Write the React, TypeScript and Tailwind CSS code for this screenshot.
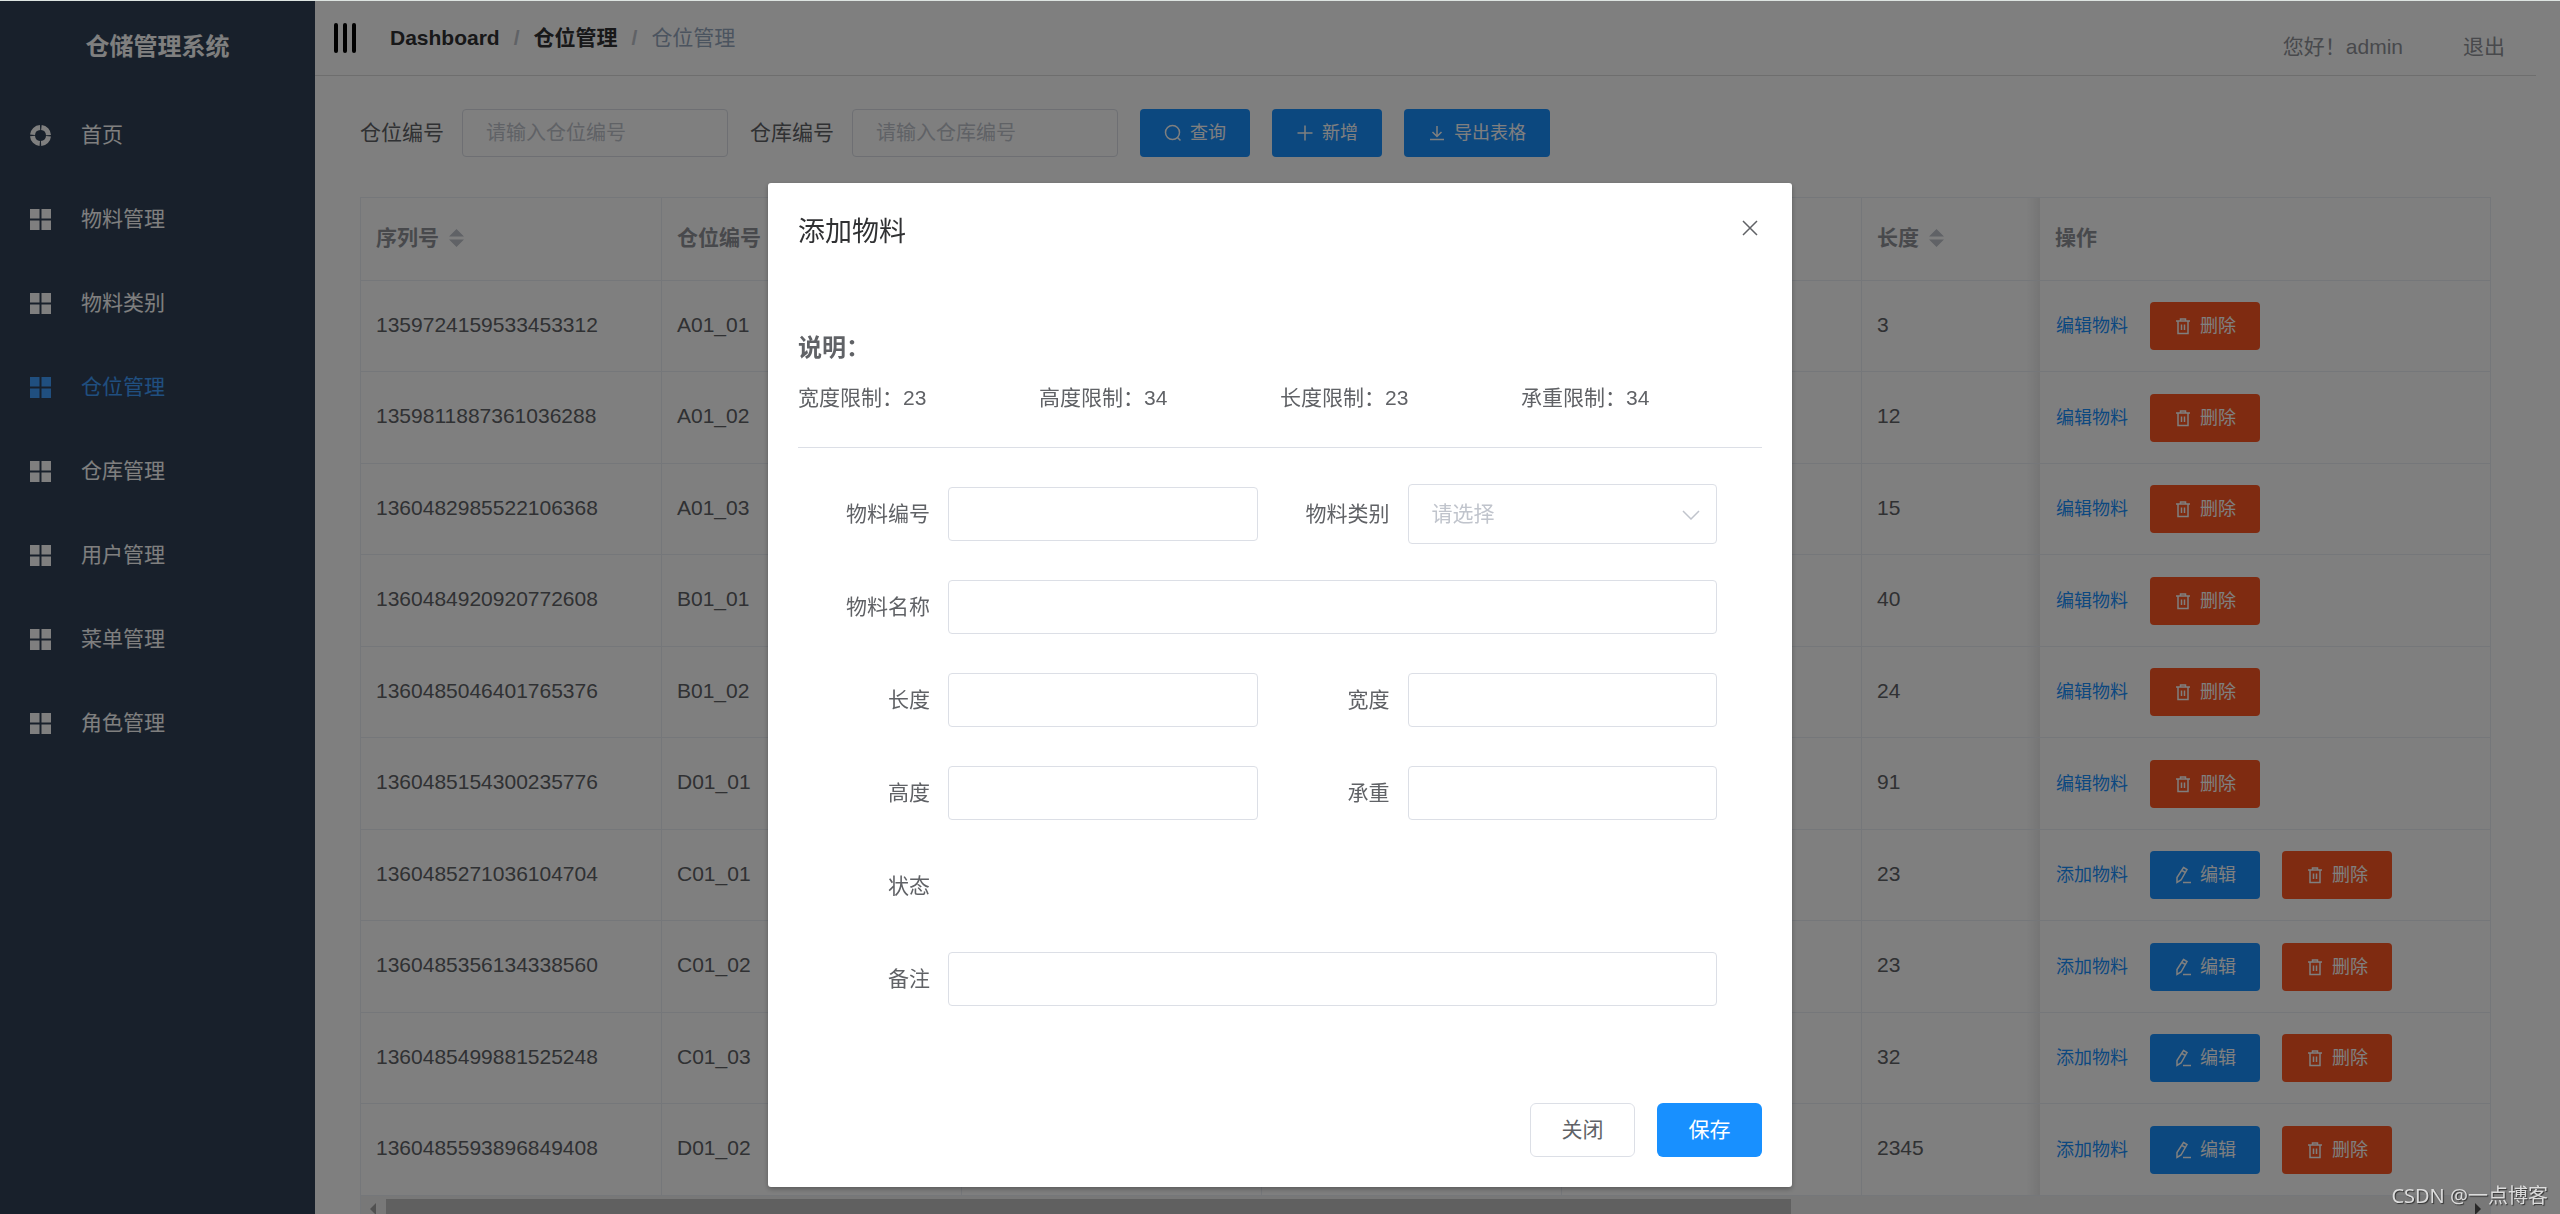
import type { ReactNode } from 'react';

type Row = { id: string; code: string; length: string; stocked: boolean };

const menu = ['首页', '物料管理', '物料类别', '仓位管理', '仓库管理', '用户管理', '菜单管理', '角色管理'];
const activeMenu = '仓位管理';

const rows: Row[] = [
  { id: '1359724159533453312', code: 'A01_01', length: '3', stocked: true },
  { id: '1359811887361036288', code: 'A01_02', length: '12', stocked: true },
  { id: '1360482985522106368', code: 'A01_03', length: '15', stocked: true },
  { id: '1360484920920772608', code: 'B01_01', length: '40', stocked: true },
  { id: '1360485046401765376', code: 'B01_02', length: '24', stocked: true },
  { id: '1360485154300235776', code: 'D01_01', length: '91', stocked: true },
  { id: '1360485271036104704', code: 'C01_01', length: '23', stocked: false },
  { id: '1360485356134338560', code: 'C01_02', length: '23', stocked: false },
  { id: '1360485499881525248', code: 'C01_03', length: '32', stocked: false },
  { id: '1360485593896849408', code: 'D01_02', length: '2345', stocked: false },
];

const limits = [
  ['宽度限制', '23'],
  ['高度限制', '34'],
  ['长度限制', '23'],
  ['承重限制', '34'],
];

const iconPaths = {
  search: (
    <>
      <circle cx="8.5" cy="8.5" r="7" />
      <path d="M13.5 13.5 16.5 16.5" />
    </>
  ),
  plus: <path d="M9 1.5v15M1.5 9h15" />,
  download: <path d="M2 15.5h14M9 2v10.5M4.5 8 9 12.5 13.5 8" />,
  trash: (
    <>
      <path d="M2 4h14M4 4v12.5h10V4M6.5 4V2h5v2" />
      <path d="M7.5 7.5v5.5M10.5 7.5v5.5" />
    </>
  ),
  edit: (
    <>
      <path d="M9.5 1.5 13 3.5 7 14 3 16.5 3 11.5zM8 4.5l3.5 2" />
      <path d="M9 16.5h8" />
    </>
  ),
};

function Icon({ name }: { name: keyof typeof iconPaths }) {
  return (
    <svg viewBox="0 0 18 18" className="size-[18px] shrink-0" fill="none" stroke="currentColor" strokeWidth="1.5" aria-hidden="true">
      {iconPaths[name]}
    </svg>
  );
}

function MenuIcon({ home }: { home: boolean }) {
  return (
    <svg viewBox="0 0 21 21" className="size-[21px] shrink-0" aria-hidden="true">
      {home ? (
        <circle cx="10.5" cy="10.5" r="8" fill="none" stroke="currentColor" strokeWidth="5" strokeDasharray="11.17 1.396" strokeDashoffset="-0.7" />
      ) : (
        <path fill="currentColor" d="M0 0h9.5v9.5H0zM11.5 0H21v9.5h-9.5zM0 11.5h9.5V21H0zM11.5 11.5H21V21h-9.5z" />
      )}
    </svg>
  );
}

function SortIcon() {
  return (
    <svg viewBox="0 0 15 18" className="h-[18px] w-[15px]" fill="#c0c4cc" aria-hidden="true">
      <path d="M7.5 0 15 7.5H0zM7.5 18 0 10.5h15z" />
    </svg>
  );
}

function ActionButton({ icon, danger, children }: { icon: keyof typeof iconPaths; danger?: boolean; children: ReactNode }) {
  return (
    <button
      type="button"
      className={`flex h-12 shrink-0 items-center gap-2 rounded px-6 text-lg text-white ${danger ? 'bg-[#ff5722]' : 'bg-[#1890ff]'}`}
    >
      <Icon name={icon} />
      {children}
    </button>
  );
}

function SearchField({ id, label }: { id: string; label: string }) {
  return (
    <div className="flex items-center gap-[18px]">
      <label htmlFor={id} className="text-[#606266]">{label}</label>
      <input
        id={id}
        placeholder={`请输入${label}`}
        className="h-12 w-[266px] rounded-sm border border-[#dcdfe6] bg-white px-[23px] text-xl placeholder:text-[#c0c4cc]"
      />
    </div>
  );
}

function Sidebar() {
  return (
    <aside className="w-[315px] shrink-0 bg-[#304156] text-white">
      <h1 className="flex h-[92px] items-center justify-center text-2xl font-bold">仓储管理系统</h1>
      <nav>
        {menu.map(item => (
          <a
            key={item}
            href="#"
            className={`flex h-[84px] items-center gap-[30px] px-[30px] ${item === activeMenu ? 'text-[#409eff]' : ''}`}
          >
            <MenuIcon home={item === '首页'} />
            {item}
          </a>
        ))}
      </nav>
    </aside>
  );
}

function Header() {
  return (
    <header className="flex h-[75px] justify-between border-b border-[#dcdcdc] pl-[19px]">
      <div className="flex h-[74px] items-center gap-[34px]">
        <button type="button" aria-label="折叠菜单" className="flex gap-[5px]">
          <span className="h-[30px] w-1 rounded-sm bg-black" />
          <span className="h-[30px] w-1 rounded-sm bg-black" />
          <span className="h-[30px] w-1 rounded-sm bg-black" />
        </button>
        <nav className="flex gap-[14px] font-bold text-[#303133]">
          <a href="#">Dashboard</a>
          <span className="text-[#c0c4cc]">/</span>
          <a href="#">仓位管理</a>
          <span className="text-[#c0c4cc]">/</span>
          <span className="font-normal text-[#97a8be]">仓位管理</span>
        </nav>
      </div>
      <div className="flex items-center gap-[60px] pt-[18px] pr-[31px] text-[#909399]">
        <span>您好！admin</span>
        <a href="#">退出</a>
      </div>
    </header>
  );
}

function StorageTable() {
  const cell = 'border-b border-r border-[#ebeef5] px-[15px] pb-[3px]';
  const actionCell = 'border-b border-r border-[#ebeef5] px-4';
  const shaded = 'border-b border-[#ebeef5] px-[15px] pb-[3px] bg-linear-to-l from-black/8 to-transparent to-[14px]';

  return (
    <div className="mt-10 border-t border-l border-[#ebeef5]">
      <table className="w-full table-fixed border-separate border-spacing-0 text-left text-[#606266]">
        <colgroup>
          <col className="w-[301px]" />
          <col className="w-[300px]" />
          <col className="w-[300px]" />
          <col className="w-[300px]" />
          <col className="w-[300px]" />
          <col />
          <col className="w-[451px]" />
        </colgroup>
        <thead>
          <tr className="h-[83px] text-[#909399]">
            <th className={cell}>
              <span className="flex items-center gap-[10px]">序列号<SortIcon /></span>
            </th>
            <th className={cell}>
              <span className="flex items-center gap-[10px]">仓位编号<SortIcon /></span>
            </th>
            <th className={cell}></th>
            <th className={cell}></th>
            <th className={cell}></th>
            <th className={shaded}>
              <span className="flex items-center gap-[10px]">长度<SortIcon /></span>
            </th>
            <th className={cell}>操作</th>
          </tr>
        </thead>
        <tbody>
          {rows.map(row => (
            <tr key={row.id} className="odd:h-[91px] even:h-[92px]">
              <td className={cell}>{row.id}</td>
              <td className={cell}>{row.code}</td>
              <td className={cell}></td>
              <td className={cell}></td>
              <td className={cell}></td>
              <td className={shaded}>{row.length}</td>
              <td className={actionCell}>
                <div className="flex items-center gap-[22px]">
                  <button type="button" className="text-lg text-[#1890ff]">
                    {row.stocked ? '编辑物料' : '添加物料'}
                  </button>
                  {!row.stocked && <ActionButton icon="edit">编辑</ActionButton>}
                  <ActionButton icon="trash" danger>删除</ActionButton>
                </div>
              </td>
            </tr>
          ))}
        </tbody>
      </table>
      <div className="flex h-[26px] items-center justify-between border-r border-[#ebeef5] bg-[#f1f1f1] px-[9px]">
        <svg viewBox="0 0 6 12" className="h-3 w-[6px]" fill="#a3a3a3" aria-hidden="true"><path d="M6 0v12L0 6z" /></svg>
        <div className="mx-[10px] flex-1">
          <div className="h-5 w-[67.6%] bg-[#c1c1c1]" />
        </div>
        <svg viewBox="0 0 6 12" className="h-3 w-[6px]" fill="#505050" aria-hidden="true"><path d="M0 0v12L6 6z" /></svg>
      </div>
    </div>
  );
}

function FormRow({ id, label, wide, children }: { id: string; label: string; wide?: boolean; children?: ReactNode }) {
  return (
    <div className={`flex h-[60px] items-center ${wide ? 'col-span-2' : ''}`}>
      <label htmlFor={id} className="w-[150px] shrink-0 pr-[18px] text-right">{label}</label>
      {children ?? <input id={id} className="h-[54px] w-full min-w-0 rounded-sm border border-[#dcdfe6] bg-white px-[22px]" />}
    </div>
  );
}

function AddMaterialDialog() {
  return (
    <div
      role="dialog"
      aria-modal="true"
      aria-labelledby="dialog-title"
      className="mt-[15vh] w-2/5 rounded-[3px] bg-white px-[30px] pb-[30px] text-[#606266] shadow-[0_2px_5px_rgba(0,0,0,0.3)]"
    >
      <div className="flex items-center justify-between pt-[31px]">
        <h2 id="dialog-title" className="text-[27px] leading-9 text-[#303133]">添加物料</h2>
        <button type="button" aria-label="关闭对话框" className="mb-2">
          <svg viewBox="0 0 24 24" className="size-6" fill="none" stroke="#606266" strokeWidth="1.5" aria-hidden="true">
            <path d="M5 5l14 14M19 5 5 19" />
          </svg>
        </button>
      </div>

      <h3 className="mt-20 text-2xl leading-9 font-bold">说明：</h3>
      <div className="mt-4 grid grid-cols-4 leading-8">
        {limits.map(([name, value]) => (
          <span key={name}>{name}：{value}</span>
        ))}
      </div>
      <hr className="mt-[33px] border-[#dcdfe6]" />

      <form className="mt-9 grid grid-cols-2 gap-y-[33px] pr-[45px]">
        <FormRow id="material-code" label="物料编号" />
        <FormRow id="material-type" label="物料类别">
          <div className="relative flex-1">
            <select
              id="material-type"
              defaultValue=""
              className="h-[60px] w-full appearance-none rounded-sm border border-[#dcdfe6] bg-white px-[23px] text-[#c0c4cc]"
            >
              <option value="">请选择</option>
            </select>
            <svg
              viewBox="0 0 18 10"
              className="pointer-events-none absolute top-[26px] right-[17px] h-[10px] w-[18px]"
              fill="none"
              stroke="#c0c4cc"
              strokeWidth="1.5"
              aria-hidden="true"
            >
              <path d="M1 1l8 8 8-8" />
            </svg>
          </div>
        </FormRow>
        <FormRow id="material-name" label="物料名称" wide />
        <FormRow id="length" label="长度" />
        <FormRow id="width" label="宽度" />
        <FormRow id="height" label="高度" />
        <FormRow id="weight" label="承重" />
        <div className="col-span-2 flex h-[60px] items-center">
          <span className="w-[150px] pr-[18px] text-right">状态</span>
        </div>
        <FormRow id="remark" label="备注" wide />
      </form>

      <div className="mt-[94px] flex justify-end gap-[22px]">
        <button type="button" className="h-[54px] w-[105px] rounded-md border border-[#dcdfe6] bg-white">关闭</button>
        <button type="button" className="h-[54px] w-[105px] rounded-md bg-[#1890ff] text-white">保存</button>
      </div>
    </div>
  );
}

export default function App() {
  return (
    <div className="flex h-screen flex-col overflow-hidden bg-white font-['Liberation_Sans','Noto_Sans_CJK_SC',sans-serif] text-[21px] leading-8">
      <div className="h-px shrink-0 bg-[#dde4e1]" />
      <div className="flex min-h-0 flex-1">
        <Sidebar />
        <main className="min-w-0 flex-1 pr-6">
          <Header />
          <div className="px-[45px] pt-[33px]">
            <div className="flex items-center gap-[22px]">
              <SearchField id="bin-code" label="仓位编号" />
              <SearchField id="warehouse-code" label="仓库编号" />
              <ActionButton icon="search">查询</ActionButton>
              <ActionButton icon="plus">新增</ActionButton>
              <ActionButton icon="download">导出表格</ActionButton>
            </div>
            <StorageTable />
          </div>
        </main>
      </div>

      <div className="fixed inset-0 top-px flex items-start justify-center bg-black/50">
        <AddMaterialDialog />
      </div>
      <div className="fixed right-3 bottom-1 font-['Noto_Sans','Noto_Sans_CJK_SC',sans-serif] text-xl text-[#dcdcdc] text-shadow-[1px_1px_1px_#333]">
        CSDN @一点博客
      </div>
    </div>
  );
}
